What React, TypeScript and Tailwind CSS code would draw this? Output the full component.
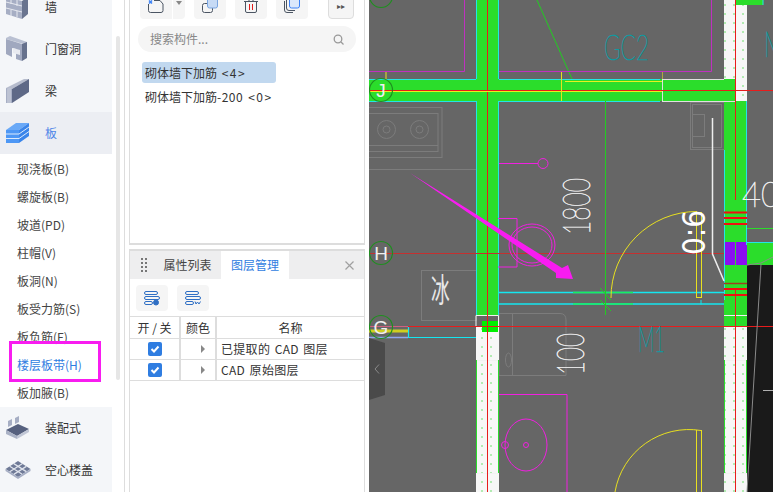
const font = { fontFamily: '"Noto Sans CJK SC", "Noto Sans", sans-serif' };

function WallIcon() {
  return (
    <svg width="26" height="26" viewBox="0 0 26 26">
      <path d="M1 3 L17 7 L17 25 L1 20 Z" fill="#a6aec4" />
      <path d="M17 7 L23 3 L23 20 L17 25 Z" fill="#69748f" />
      <path d="M1 8 L17 12 M1 14 L17 18 M6 4 V10 M12 6 V12 M6 16 V22 M12 17 V23" stroke="#e6e9f0" strokeWidth="1" />
    </svg>
  );
}

function DoorIcon() {
  return (
    <svg width="26" height="26" viewBox="0 0 26 26">
      <path d="M1 2 L5 0 L22 6 L22 9 L1 3 Z" fill="#b9c0d2" />
      <path d="M1 3 L17 8 L17 25 L11 23 L11 13 L7 12 L7 21 L1 18 Z" fill="#a0a8bf" />
      <path d="M17 8 L22 6 L22 22 L17 25 Z" fill="#66718d" />
      <path d="M8 12 L15 14 L15 19 L8 17 Z" fill="#e8eaf0" />
    </svg>
  );
}

function BeamIcon() {
  return (
    <svg width="26" height="26" viewBox="0 0 26 26">
      <path d="M1 10 L19 1 L24 1 L7 11 Z" fill="#b6bccd" />
      <path d="M1 10 L7 11 L7 25 L1 25 Z" fill="#a6aec4" />
      <path d="M7 11 L24 1 L24 14 L7 25 Z" fill="#5e6987" />
      <path d="M3 11 V25 M5 11 V25" stroke="#e6e9f0" strokeWidth="0.7" />
    </svg>
  );
}

function SlabIcon() {
  return (
    <svg width="26" height="22" viewBox="0 0 26 22">
      <path d="M1 8 L11 1 L24 1 L14 8 Z" fill="#6aa9f7" />
      <path d="M1 8 H14 V21 H1 Z" fill="#4d97f5" />
      <path d="M14 8 L24 1 V14 L14 21 Z" fill="#3a85ea" />
      <path d="M1 12 H14 L24 5 M1 16.500 H14 L24 9.500" stroke="#dceafc" strokeWidth="1" fill="none" />
    </svg>
  );
}

function PrefabIcon() {
  return (
    <svg width="26" height="24" viewBox="0 0 26 24">
      <path d="M1 14 L13 8 L24 13 L12 20 Z" fill="#56617f" />
      <path d="M1 14 L12 20 V23 L1 18 Z" fill="#aab2c6" />
      <path d="M12 20 L24 13 V16 L12 23 Z" fill="#c1c7d6" />
      <path d="M3 5 L7 3 V9 L3 11 Z M10 2 L14 0 V6 L10 8 Z" fill="#a6aec4" />
    </svg>
  );
}

function HollowIcon() {
  return (
    <svg width="26" height="20" viewBox="0 0 26 20">
      <path d="M0.500 9 L13 1 L25.500 9 L13 17 Z" fill="#6f7a97" />
      <path d="M0.500 9 L13 17 L25.500 9 V11 L13 19 L0.500 11 Z" fill="#a6aec4" />
      <path d="M4.700 6.300 L17.200 14.300 M8.800 3.600 L21.300 11.600 M4.700 11.700 L17.200 3.700 M8.800 14.400 L21.300 6.400" stroke="#dfe3ec" strokeWidth="1.300" />
    </svg>
  );
}

function CadCanvas() {
  return (
    <svg className="block" width="404" height="492" viewBox="369 0 404 492">
      <defs>
        <pattern id="dots" x="476" y="0" width="9" height="9" patternUnits="userSpaceOnUse">
          <rect width="9" height="9" fill="#f7f7f7" />
          <circle cx="6" cy="5" r="1" fill="#9be89b" />
        </pattern>
      </defs>
      <rect x="369" y="0" width="404" height="492" fill="#666666" />

      {/* furniture */}
      <g fill="none" stroke="#7c7c7c" strokeWidth="1">
        <rect x="366" y="107.500" width="76" height="50" />
        <rect x="366" y="113.500" width="72" height="38" />
        <circle cx="386.500" cy="129.500" r="9" />
        <circle cx="386.500" cy="129.500" r="3.500" />
        <circle cx="419.500" cy="129.500" r="9" />
        <circle cx="419.500" cy="129.500" r="3.500" />
        <path d="M369 145.500 H438 M369 169.500 H476" />
        <rect x="421.500" y="270.500" width="55" height="50" />
        <path d="M499 313.500 H560 Q566 313.500 566 320 V375.500 H499 V313.500 M512.500 313.500 V375.500" />
        <ellipse cx="508.500" cy="360" rx="3" ry="7" />
        <rect x="690.500" y="102.500" width="34" height="47" />
        <rect x="692.500" y="104.500" width="29" height="43" />
        <rect x="692.500" y="114.500" width="12" height="22" />
      </g>

      {/* walls */}
      <rect x="477" y="0" width="22" height="316" fill="#2bdd2b" />
      <rect x="369" y="79" width="355" height="22" fill="#2bdd2b" />
      <rect x="724" y="101" width="23" height="226" fill="#2bdd2b" />
      <rect x="724" y="79" width="12" height="22" fill="#2bdd2b" />
      <rect x="735" y="0" width="28" height="5" fill="#2bdd2b" />
      <rect x="747" y="242" width="26" height="23" fill="#2bdd2b" />
      <path d="M747 265 H773 V492 H747 Z" fill="#1a1a1a" />
      <rect x="725" y="242" width="10" height="23" fill="#8a10f0" />
      <rect x="736" y="242" width="11" height="23" fill="#8a10f0" />

      {/* dotted columns */}
      <rect x="476" y="327" width="23" height="165" fill="url(#dots)" />
      <rect x="724" y="0" width="12" height="79" fill="url(#dots)" />
      <rect x="735" y="5" width="12" height="96" fill="url(#dots)" />
      <rect x="724" y="327" width="23" height="165" fill="url(#dots)" />
      <rect x="482" y="321" width="16" height="11" fill="#00f000" />
      <path d="M476 315.500 H498.500 V327 M476 315.500 V327 M476 360.500 H499 M476 473.500 H499 M724 315.500 H747 M724 360.500 H747 M724 473.500 H747" fill="none" stroke="#f2f2f2" strokeWidth="1" />
      <path d="M476.500 360 V473 M498.500 360 V473 M724.500 360 V473 M746.500 360 V473" stroke="#2bdd2b" strokeWidth="1" />

      {/* cyan edges */}
      <g fill="none" stroke="#22e6e6" strokeWidth="1">
        <path d="M476.500 0 V79 M476.500 101 V315 M498.500 0 V79 M498.500 101 V315" />
        <path d="M369 79.500 H476 M499 79.500 H660 M369 101.500 H476 M499 101.500 H660" />
        <path d="M724.500 150 V300 M746.500 101 V245 M747 242.500 H773 M763 0 V5" />
      </g>
      <path d="M747 228.500 H773" stroke="#2bdd2b" strokeWidth="1" />
      <path d="M662 79.500 H724 M662.500 79 V101 M662 101.500 H735" fill="none" stroke="#e0e0e0" strokeWidth="1" />
      <path d="M499 292.500 H724 M499 304 H724" stroke="#14e6f0" strokeWidth="1.500" />
      <path d="M573 292.500 H633 M573 304 H633" stroke="#18ee60" strokeWidth="1.500" />
      <path d="M408 326.500 H476 M408.500 326 V338 M408 337.500 H476" fill="none" stroke="#14e6f0" strokeWidth="1.200" />
      <path d="M369 337.500 H408" stroke="#8fa8f0" strokeWidth="1.500" />
      <path d="M369 326.500 H408" stroke="#d06080" strokeWidth="1" />
      <rect x="369" y="329.500" width="39" height="3" fill="#cfcf20" />
      <path d="M701 304.500 V300" stroke="#14e6f0" strokeWidth="1" />

      {/* red axes */}
      <g stroke="#e81c1c" strokeWidth="1">
        <path d="M369 90.500 H773" />
        <path d="M369 253.500 H724" stroke="#c43030" />
        <path d="M408 326.500 H773" />
        <path d="M487.500 0 V492" />
        <path d="M735.500 0 V200 M735.500 290 V492" />
      </g>
      <path d="M724 212.500 H747 M724 218 H747 M724 224 H747 M724 289 H747 M724 295 H747" stroke="#f01010" strokeWidth="1.800" />
      <path d="M724 283.500 H747" stroke="#a04020" strokeWidth="1.500" />

      {/* yellow and green lines */}
      <path d="M369 91.500 H662 M565 81.500 H662" stroke="#e8f020" strokeWidth="1" />
      <path d="M561.500 71 V101 M369 71.500 H386 V79" fill="none" stroke="#e8e020" strokeWidth="1" />
      <path d="M662.500 71 V79" stroke="#b0a840" strokeWidth="1" />
      <path d="M537 0 L572 79" stroke="#22cc22" strokeWidth="1" />
      <path d="M605.500 101 V315" stroke="#22cc22" strokeWidth="1" />
      <path d="M600 288 L611 300 M600 300 L611 311" stroke="#22cc22" strokeWidth="1" />
      <path d="M611 298 A86 86 0 0 1 697 211.500" fill="none" stroke="#e8e020" strokeWidth="1" />
      <rect x="696.500" y="212.500" width="5" height="85" fill="none" stroke="#e8e020" strokeWidth="1" />
      <path d="M615 492 A75 75 0 0 1 701 430.500" fill="none" stroke="#e8e020" strokeWidth="1" />
      <path d="M696.500 430 V492 M701.500 430 V492" stroke="#e8e020" strokeWidth="1" />

      {/* magenta */}
      <g fill="none" stroke="#c030c0" strokeWidth="1">
        <path d="M369 71.500 H464.500 V0 M499 71.500 H711.500 V0" />
      </g>
      <g fill="none" stroke="#f020e0" strokeWidth="1">
        <circle cx="543" cy="163.500" r="5" />
        <path d="M499 163.500 H538" />
        <path d="M498 218.500 H517 V267 H498" />
        <ellipse cx="532" cy="245" rx="23" ry="21" />
        <ellipse cx="532" cy="245" rx="20" ry="18" />
        <path d="M499 394.500 H567 V492" />
        <ellipse cx="526" cy="445" rx="21" ry="26" />
        <circle cx="526" cy="445" r="2.500" />
        <circle cx="505" cy="445" r="3.500" />
      </g>
      <path d="M410 173 L562 268 L568 265 L573 279 L556 278 L556 273 Z" fill="#f81cf0" />

      {/* axis bubbles */}
      <g fill="none" stroke="#1f8f1f" strokeWidth="1.200">
        <circle cx="381" cy="90" r="11.500" />
        <circle cx="381" cy="253" r="11.500" />
        <circle cx="381" cy="327" r="11.500" />
        <circle cx="381" cy="-4" r="11.500" />
      </g>
      <g fill="#f0f0f0" fontSize="19" fontFamily='"Liberation Sans", sans-serif' textAnchor="middle">
        <text x="381" y="97">J</text>
        <text x="381" y="260">H</text>
        <text x="381" y="334">G</text>
      </g>

      {/* drawing text */}
      <g fontFamily='"DejaVu Sans ExtraLight", "Lato", sans-serif' fontWeight="200" strokeWidth="0.700">
        <text x="604" y="60" fontSize="36" fill="#0f9aa2" stroke="#0f9aa2" textLength="45" lengthAdjust="spacingAndGlyphs">GC2</text>
        <text x="638" y="352" fontSize="36" fill="#0f9aa2" stroke="#0f9aa2" textLength="27" lengthAdjust="spacingAndGlyphs">M1</text>
        <text x="764" y="57" fontSize="36" fill="#0f9aa2" stroke="#0f9aa2" textLength="20" lengthAdjust="spacingAndGlyphs">M</text>
        <text x="742" y="207" fontSize="36" fill="#f0f0f0" stroke="#f0f0f0" textLength="38" lengthAdjust="spacingAndGlyphs">40</text>
        <text transform="translate(590 235) rotate(-90)" fontSize="38" fill="#f0f0f0" stroke="#f0f0f0" textLength="57" lengthAdjust="spacingAndGlyphs">1800</text>
        <text transform="translate(584 375) rotate(-90)" fontSize="38" fill="#f0f0f0" stroke="#f0f0f0" textLength="42" lengthAdjust="spacingAndGlyphs">100</text>
      </g>
      <text transform="translate(705 255) rotate(-90)" fontFamily='"DejaVu Sans", sans-serif' fontSize="32" fill="#ffffff" textLength="45" lengthAdjust="spacingAndGlyphs">0:6</text>
      <text transform="translate(431 302) scale(0.85 1.500)" fontSize="22" fill="#e8e8e8" fontFamily='"Noto Sans CJK SC", sans-serif'>冰</text>
      <path d="M712.500 118 V254 L724 281" fill="none" stroke="#eeeeee" strokeWidth="1.500" />
      <path d="M761 264 L747 492" stroke="#8a8a8a" strokeWidth="1" />
      <path d="M763 390.500 H773" stroke="#b0b0b0" strokeWidth="1" />
      <path d="M747 265 L761 263 L773 257" fill="none" stroke="#8a8a8a" strokeWidth="1" />
    </svg>
  );
}

const tools = [
  { w: "w-8", icon: "copy" },
  { w: "w-8", icon: "trash" },
  { w: "w-8", icon: "stack" },
];

function ToolIcon({ name }: { name: string }) {
  if (name === "trash") {
    return (
      <svg width="14" height="14" viewBox="0 0 14 14" fill="none" stroke="#4b5563" strokeWidth="1">
        <path d="M0 2.500 H14 M1.500 2.500 V12 Q1.500 13.500 3 13.500 H11 Q12.500 13.500 12.500 12 V2.500 M5 2.500 V0.500 H9 V2.500" />
        <path d="M5.500 5 V11 M8.500 5 V11" stroke="#e11d1d" />
      </svg>
    );
  }
  if (name === "stack") {
    return (
      <svg width="16" height="14" viewBox="0 0 16 14" fill="none" stroke="#4b5563" strokeWidth="1">
        <path d="M0.500 2 V11 Q0.500 13.500 3 13.500 H9 M2.500 1 V9 Q2.500 11.500 5 11.500 H11" />
        <rect x="5.500" y="-5" width="10" height="14" rx="2" fill="#dbe8fb" stroke="#3b82f6" />
      </svg>
    );
  }
  return (
    <svg width="16" height="14" viewBox="0 0 16 14" fill="none" stroke="#4b5563" strokeWidth="1">
      <rect x="0.500" y="4.500" width="10" height="9" rx="2" />
      <rect x="5.500" y="-5" width="10" height="14" rx="2" fill="#c6daf5" stroke="#7aa5e0" />
    </svg>
  );
}

function LayerIcon({ variant }: { variant: "eye" | "wave" }) {
  return (
    <svg width="16" height="15" viewBox="0 0 16 15" fill="none" stroke="#2f6fc4" strokeWidth="1">
      <rect x="0.500" y="0.500" width="13" height="3" rx="1.500" />
      <rect x="0.500" y="5.500" width="15" height="3" rx="1.500" />
      <rect x="0.500" y="10.500" width="8" height="3" rx="1.500" />
      {variant === "eye" ? (
        <circle cx="12" cy="11.500" r="2.500" fill="#2f6fc4" />
      ) : (
        <path d="M10 10.500 L11 13 L12.500 11 L14 13 L15.500 10.500" />
      )}
    </svg>
  );
}

function Check() {
  return (
    <span className="flex h-[14px] w-[14px] items-center justify-center rounded-[2px] bg-[#2f7de1]">
      <svg width="10" height="10" viewBox="0 0 10 10" fill="none" stroke="#ffffff" strokeWidth="2">
        <path d="M1.500 5 L4 7.500 L8.500 2.500" />
      </svg>
    </span>
  );
}

const subItems = ["现浇板(B)", "螺旋板(B)", "坡道(PD)", "柱帽(V)", "板洞(N)", "板受力筋(S)", "板负筋(F)", "楼层板带(H)", "板加腋(B)"];

function CatRow({ label, icon, active }: { label: string; icon: React.ReactNode; active?: boolean }) {
  return (
    <div className={`flex h-[42px] shrink-0 items-center ${active ? "bg-[#eceef3] text-[#4f86e8]" : "text-[#333333]"}`}>
      <div className="flex w-[45px] justify-center pr-[9px]">{icon}</div>
      <span className="text-xs">{label}</span>
    </div>
  );
}

export default function App() {
  return (
    <div className="flex h-[492px] w-[773px] overflow-hidden bg-white" style={font}>
      {/* category sidebar */}
      <div className="relative flex w-[125px] shrink-0 border-r border-[#dddddd]">
        <div className="-mt-[14px] flex w-[112px] shrink-0 flex-col">
          <div className="bg-[#f4f6f9]">
            <CatRow label="墙" icon={<WallIcon />} />
            <CatRow label="门窗洞" icon={<DoorIcon />} />
            <CatRow label="梁" icon={<BeamIcon />} />
          </div>
          <CatRow label="板" icon={<SlabIcon />} active />
          <div className="pt-px">
            {subItems.map((s) => (
              <div key={s} className={`flex h-[28px] items-center pl-[17px] text-xs ${s === "楼层板带(H)" ? "text-[#2f7de1]" : "text-[#444444]"}`}>
                {s}
              </div>
            ))}
          </div>
          <div className="flex-1 bg-[#f4f6f9]">
            <CatRow label="装配式" icon={<PrefabIcon />} />
            <CatRow label="空心楼盖" icon={<HollowIcon />} />
          </div>
        </div>
        <div className="ml-[4px] mt-[36px] h-[344px] w-[4px] rounded-full bg-[#e6e6e6]" />
        <div className="absolute left-[9px] top-[341px] h-[41px] w-[92px] border-[3px] border-[#f81cf0]" />
      </div>

      {/* component panels */}
      <div className="flex w-[244px] shrink-0 flex-col gap-[4px] px-[4px]">
        <div className="flex h-[245px] shrink-0 flex-col overflow-hidden border-x border-b-2 border-[#dddddd]">
          <div className="-mt-[13px] flex h-[32px] shrink-0 items-center pl-[10px]">
            <div className="flex h-8 w-8 items-end justify-center rounded-l-[4px] bg-[#f5f5f5] pb-[6px]">
              <svg width="16" height="13" viewBox="0 0 16 13" fill="none" stroke="#4b5563" strokeWidth="1">
                <path d="M0.500 4 V10.500 Q0.500 12.500 2.500 12.500 H13 Q15 12.500 15 10.500 V4 L12 0.500 H6" />
                <path d="M1 0.500 L4 3.500 M4 0.500 L1 3.500" stroke="#3b82f6" strokeWidth="1.500" />
              </svg>
            </div>
            <div className="ml-px flex h-8 w-3 items-center justify-center rounded-r-[4px] bg-[#f5f5f5]">
              <span className="border-x-[3px] border-t-[4px] border-x-transparent border-t-[#888888]" />
            </div>
            <div className="ml-[9px] flex gap-[9px]">
              {tools.map((t) => (
                <div key={t.icon} className={`flex h-8 ${t.w} items-end justify-center rounded-[4px] bg-[#f5f5f5] pb-[6px]`}>
                  <ToolIcon name={t.icon} />
                </div>
              ))}
            </div>
            <div className="ml-[20px] flex h-8 w-[26px] items-end justify-center rounded-[4px] border border-[#dddddd] bg-[#f5f5f5] pb-[8px]">
              <span className="text-[8px] leading-none text-[#555555]">▸▸</span>
            </div>
          </div>
          <div className="mx-[8px] mt-[7px] flex h-[26px] shrink-0 items-center justify-between rounded-full bg-[#f5f5f5] pl-[12px] pr-[12px]">
            <span className="text-xs text-[#888888]">搜索构件...</span>
            <svg width="11" height="11" viewBox="0 0 11 11" fill="none" stroke="#999999" strokeWidth="1.300">
              <circle cx="5" cy="5" r="3.800" />
              <path d="M8 8 L10.500 10.500" />
            </svg>
          </div>
          <div className="ml-[12px] mt-[10px] flex h-[21px] w-[134px] shrink-0 items-center whitespace-pre rounded-[3px] bg-[#c1d8ef] pl-[3px] text-xs text-[#333333]">
            砌体墙下加筋 <span className="ml-[2px] tracking-[1.5px]">{"<4>"}</span>
          </div>
          <div className="ml-[12px] mt-[3px] flex h-[21px] shrink-0 items-center whitespace-pre pl-[3px] text-xs text-[#333333]">
            砌体墙下加筋<span className="tracking-[0.5px]">-200</span> <span className="ml-[5px] tracking-[1.5px]">{"<0>"}</span>
          </div>
        </div>

        <div className="flex flex-1 flex-col border-x border-t-2 border-[#dddddd]">
          <div className="flex h-[28px] shrink-0 items-center bg-[#eeeeef]">
            <div className="flex w-[18px] justify-end pr-px">
              <div className="grid grid-cols-2 gap-x-[2px] gap-y-[2px]">
                {[0, 1, 2, 3, 4, 5, 6, 7].map((i) => (
                  <span key={i} className="h-[2px] w-[2px] bg-[#777777]" />
                ))}
              </div>
            </div>
            <div className="w-[73px] pl-[6px] text-center text-xs text-[#444444]">属性列表</div>
            <div className="flex h-full w-[68px] items-center justify-center bg-white text-xs text-[#2f7de1]">图层管理</div>
            <svg className="ml-[56px]" width="9" height="9" viewBox="0 0 9 9" stroke="#a0a0a0" strokeWidth="1.200">
              <path d="M0.500 0.500 L8.500 8.500 M8.500 0.500 L0.500 8.500" />
            </svg>
          </div>
          <div className="flex shrink-0 gap-[9px] pl-[6px] pt-[6px]">
            <div className="flex h-[26px] w-8 items-center justify-center rounded-[4px] bg-[#f5f5f5]">
              <LayerIcon variant="eye" />
            </div>
            <div className="flex h-[26px] w-8 items-center justify-center rounded-[4px] bg-[#f5f5f5]">
              <LayerIcon variant="wave" />
            </div>
          </div>
          <div className="mt-[5px] grid grid-cols-[51px_36px_1fr] border-y border-[#dddddd] text-xs text-[#333333] [&>div]:flex [&>div]:h-[21px] [&>div]:items-center">
            <div className="justify-center border-r-2 border-[#dddddd]">开 / 关</div>
            <div className="justify-center border-r-2 border-[#dddddd]">颜色</div>
            <div className="justify-center">名称</div>
            <div className="justify-center border-r-2 border-t border-[#dddddd]"><Check /></div>
            <div className="justify-center border-r-2 border-t border-[#dddddd] pl-[9px]"><span className="border-y-[4px] border-l-[4px] border-y-transparent border-l-[#888888]" /></div>
            <div className="whitespace-pre border-t border-[#dddddd] pl-[4px] tracking-[0.3px] [word-spacing:1.500px]">已提取的 CAD 图层</div>
            <div className="justify-center border-r-2 border-t border-[#dddddd]"><Check /></div>
            <div className="justify-center border-r-2 border-t border-[#dddddd] pl-[9px]"><span className="border-y-[4px] border-l-[4px] border-y-transparent border-l-[#888888]" /></div>
            <div className="whitespace-pre border-t border-[#dddddd] pl-[4px] tracking-[0.3px] [word-spacing:1.500px]">CAD 原始图层</div>
          </div>
        </div>
      </div>

      {/* drawing canvas */}
      <div className="relative flex-1 overflow-hidden">
        <CadCanvas />
        <div className="absolute left-0 top-[338px] flex h-[62px] w-[16px] items-center justify-center bg-[#4a4a4a] [clip-path:polygon(0_0,100%_8%,100%_92%,0_100%)]">
          <svg width="6" height="10" viewBox="0 0 6 10" fill="none" stroke="#8a8a8a" strokeWidth="1">
            <path d="M5 0.500 L1 5 L5 9.500" />
          </svg>
        </div>
      </div>
    </div>
  );
}
